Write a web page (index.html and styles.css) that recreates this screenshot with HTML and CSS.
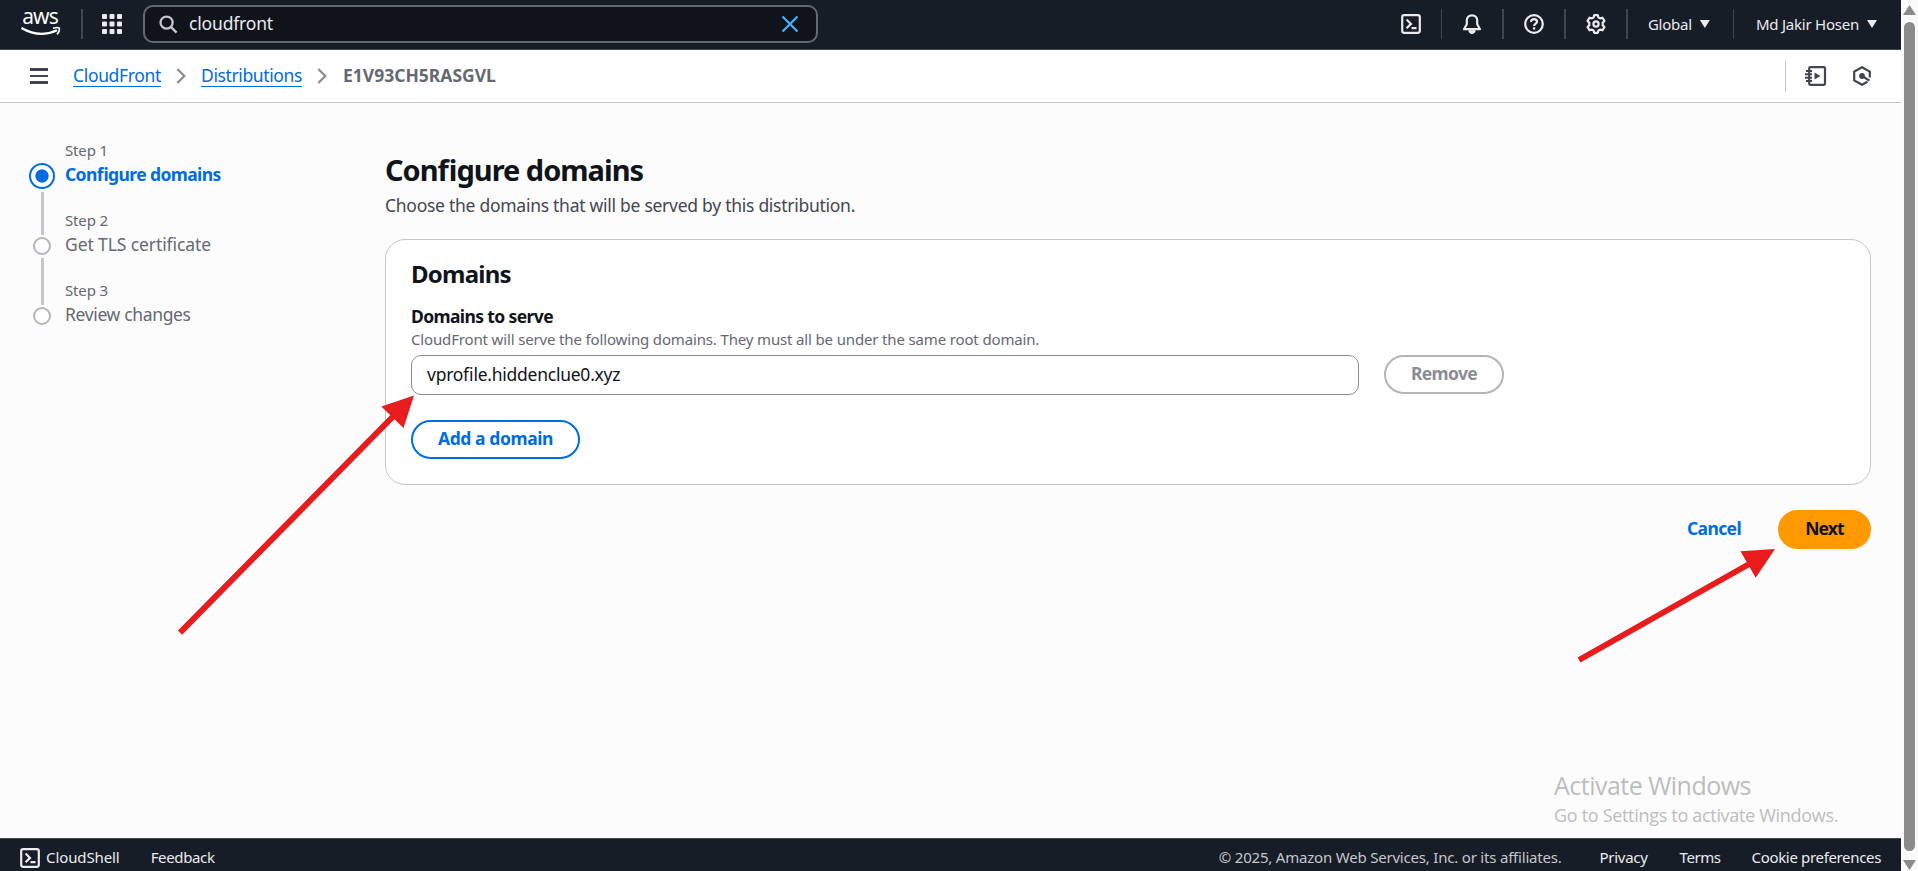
FILE: index.html
```html
<!DOCTYPE html>
<html lang="en">
<head>
<meta charset="utf-8">
<title>CloudFront - Configure domains</title>
<link rel="stylesheet" href="styles.css">
</head>
<body>
<div class="window">
  <div class="app">
    <header class="topnav">
      <svg class="logo" viewBox="0 0 40 26" aria-label="AWS">
        <text x="1.2" y="13.2" class="logo-text">aws</text>
        <path d="M.5 17Q18.500 27.500 36 19.200" fill="none" stroke="#fff" stroke-width="2.200"/>
        <path d="M32 17.200Q37 15.900 38.300 17.100Q39 20.100 36 23.400" fill="none" stroke="#fff" stroke-width="1.600"/>
      </svg>
      <span class="rule rule-logo"></span>
      <svg class="apps" viewBox="0 0 20 20" fill="#ebebf0">
        <rect x="0" y="0" width="5" height="5" rx="1"/><rect x="7.500" y="0" width="5" height="5" rx="1"/><rect x="15" y="0" width="5" height="5" rx="1"/>
        <rect x="0" y="7.500" width="5" height="5" rx="1"/><rect x="7.500" y="7.500" width="5" height="5" rx="1"/><rect x="15" y="7.500" width="5" height="5" rx="1"/>
        <rect x="0" y="15" width="5" height="5" rx="1"/><rect x="7.500" y="15" width="5" height="5" rx="1"/><rect x="15" y="15" width="5" height="5" rx="1"/>
      </svg>
      <div class="search">
        <svg class="search-icon" viewBox="0 0 20 20" fill="none" stroke="#c6c6cd" stroke-width="2.400"><circle cx="8" cy="8" r="6.400"/><path d="M12.500 12.500l6 6"/></svg>
        <span class="search-text">cloudfront</span>
        <svg class="clear" viewBox="0 0 16 16" fill="none" stroke="#42b4ff" stroke-width="2.200"><path d="M.5.5l15 15M15.500.5l-15 15"/></svg>
      </div>
      <div class="tools">
        <svg class="icon" viewBox="0 0 20 20"><rect x="1.200" y="1.200" width="17.600" height="17.600" rx="2"/><path d="M5.600 5.500l4.400 4.400-4.400 4.400M10.500 14.200h5"/></svg>
        <span class="rule"></span>
        <svg class="icon" viewBox="0 0 20 20"><path d="M10 1.400c-3.200 0-5.200 2.200-5.200 5.200v3.600L2 15.200h16l-2.800-5V6.600c0-3-2-5.200-5.200-5.200z" stroke-linejoin="round"/><path d="M7.300 16.200c.4 1.700 1.300 2.600 2.700 2.600s2.300-.9 2.700-2.600" fill="#ebebf0"/></svg>
        <span class="rule rule-wide"></span>
        <svg class="icon" viewBox="0 0 20 20"><circle cx="10" cy="10" r="8.800"/><path d="M7 8c0-1.900 1.300-2.900 3-2.900s3 1 3 2.600c0 1.800-2.900 2.100-2.900 4.300"/><path d="M10.100 13.300v2.200" stroke-width="2.300"/></svg>
        <span class="rule rule-wide"></span>
        <svg class="icon" viewBox="0 0 20 20"><path stroke-linejoin="round" d="M8.200 1.200h3.600l.7 2.400 1.500.8 2.500-.7 1.900 3.200-1.700 1.900v2.400l1.700 1.900-1.900 3.200-2.500-.7-1.500.8-.7 2.400H8.200l-.7-2.400-1.500-.8-2.500.7-1.900-3.200 1.700-1.900V8.800L1.600 6.900l1.900-3.200 2.500.7 1.500-.8z"/><circle cx="10" cy="10" r="2.600"/></svg>
        <span class="rule rule-wide"></span>
        <span class="menu menu-region">Global<i class="caret"></i></span>
        <span class="rule"></span>
        <span class="menu menu-user">Md Jakir Hosen<i class="caret"></i></span>
      </div>
    </header>

    <nav class="crumbs">
      <span class="burger"><i></i><i></i><i></i></span>
      <a class="crumb crumb-first">CloudFront</a>
      <svg class="chevron" viewBox="0 0 10 16"><path d="M1.300 1l7 7-7 7"/></svg>
      <a class="crumb crumb-second">Distributions</a>
      <svg class="chevron" viewBox="0 0 10 16"><path d="M1.300 1l7 7-7 7"/></svg>
      <b class="crumb-current">E1V93CH5RASGVL</b>
      <div class="panel-tools">
        <svg class="tutorial" viewBox="0 0 22 20"><rect x="4.200" y="1.200" width="15.800" height="17.600" rx="1"/><path d="M1 5h6M0 8.300h7M0 11.700h7M1 15h6" stroke-width="1.900"/><path d="M9.500 6.600v6.800l6-3.400z" fill="#424650" stroke="none"/></svg>
        <svg class="hexagon" viewBox="0 0 20 20"><path d="M17.800 11.500V5.600L10 1.200 2.200 5.600v8.800l7.800 4.400 5.500-3.100"/><circle cx="10" cy="10" r="2.900" fill="#424650" stroke="none"/><path d="M10 10l7.500 4.600"/></svg>
      </div>
    </nav>

    <main class="content">
      <ol class="steps">
        <li class="step step-active"><span class="track"><i class="dot"></i><i class="line"></i></span><div><div class="step-no">Step 1</div><div class="step-name">Configure domains</div></div></li>
        <li class="step"><span class="track"><i class="dot"></i><i class="line"></i></span><div><div class="step-no">Step 2</div><div class="step-name tls">Get TLS certificate</div></div></li>
        <li class="step"><span class="track"><i class="dot"></i></span><div><div class="step-no">Step 3</div><div class="step-name review">Review changes</div></div></li>
      </ol>
      <section class="wizard">
        <h1>Configure domains</h1>
        <p class="lead">Choose the domains that will be served by this distribution.</p>
        <div class="card">
          <h2>Domains</h2>
          <div class="label">Domains to serve</div>
          <div class="hint">CloudFront will serve the following domains. They must all be under the same root domain.</div>
          <div class="field-row">
            <div class="input">vprofile.hiddenclue0.xyz</div>
            <button class="btn btn-remove">Remove</button>
          </div>
          <button class="btn btn-add">Add a domain</button>
        </div>
        <div class="actions"><a class="cancel">Cancel</a><button class="btn btn-next">Next</button></div>
      </section>
    </main>

    <footer class="footer">
      <svg class="icon" viewBox="0 0 20 20"><rect x="1.200" y="1.200" width="17.600" height="17.600" rx="2"/><path d="M5.600 5.500l4.400 4.400-4.400 4.400M10.500 14.200h5"/></svg>
      <span class="shell">CloudShell</span><span class="feedback">Feedback</span>
      <span class="copyright">© 2025, Amazon Web Services, Inc. or its affiliates.</span>
      <span class="privacy">Privacy</span><span class="terms">Terms</span><span class="cookies">Cookie preferences</span>
    </footer>
  </div>

  <div class="scrollbar"><i class="arrow-up"></i><i class="thumb"></i><i class="arrow-down"></i></div>

  <div class="watermark"><div class="wm-title">Activate Windows</div><div class="wm-text">Go to Settings to activate Windows.</div></div>
  <svg class="annotations" viewBox="0 0 1918 871" fill="#e81c1c" stroke="#e81c1c">
    <path d="M180 632.700L394 415.500M1579 660L1751 563" stroke-width="6"/>
    <path d="M414 395.500L381.300 406.500 403.500 428zM1775 549L1740.500 551.200 1755.700 577.800z" stroke="none"/>
  </svg>
</div>
</body>
</html>
```
FILE: styles.css
```css
* { box-sizing: border-box; }
body { margin: 0; font-family: "Noto Sans", "Liberation Sans", sans-serif; font-size: 17.5px; line-height: 25px; color: #0f141a; }
svg { display: block; flex: none; }
h1, h2, p, ol { margin: 0; padding: 0; }
.window { position: relative; display: flex; width: 1918px; height: 871px; overflow: hidden; background: #fcfcfc; white-space: nowrap; }
.app { display: flex; flex-direction: column; width: 1901px; flex: none; }

.topnav { display: flex; align-items: center; height: 50px; padding: 0 24px 2px 21px; background: #161d26; border-bottom: 1px solid #424650; color: #ebebf0; flex: none; }
.logo { width: 40px; height: 26px; overflow: visible; }
.logo-text { font-size: 21px; fill: #fff; letter-spacing: -.9px; }
.rule { width: 1px; height: 30px; background: #424650; flex: none; }
.rule-wide { width: 2px; }
.rule-logo { width: 2px; margin: 0 19px 0 20px; }
.apps { width: 20px; height: 20px; margin-right: 21px; margin-top: 1px; }
.search { display: flex; align-items: center; width: 675px; height: 38px; margin-top: 1px; padding: 0 18px 0 14px; border: 2px solid #656871; border-radius: 10px; background: #0f141a; }
.search-icon { width: 19px; height: 19px; margin-right: 11px; }
.search-text { flex: 1; margin-top: -1px; letter-spacing: -.17px; }
.clear { width: 16px; height: 16px; }
.tools { display: flex; align-items: center; gap: 20px; margin-left: auto; font-size: 15px; }
.icon { width: 20px; height: 20px; fill: none; stroke: #ebebf0; stroke-width: 2.2; }
.menu { display: flex; align-items: center; gap: 8px; padding-top: 2px; letter-spacing: -.23px; }
.caret { width: 10px; height: 8px; margin-top: -1px; background: #ebebf0; clip-path: polygon(0 0, 100% 0, 50% 100%); }
.menu-region { margin-right: 3px; }
.menu-user { margin-left: 2px; }

.crumbs { display: flex; align-items: center; height: 53px; padding: 0 29px 0 30px; background: #fff; border-bottom: 1px solid #c6c6cd; flex: none; }
.burger { display: flex; flex-direction: column; gap: 4px; width: 18px; margin-right: 25px; }
.burger i { height: 2.500px; background: #424650; }
.crumb { color: #006ce0; height: 22px; border-bottom: 1px solid #006ce0; line-height: 20px; }
.crumb-first { width: 88px; letter-spacing: -.34px; }
.crumb-second { width: 101px; letter-spacing: -.38px; }
.chevron { width: 10px; height: 16px; margin: 0 15px 0 15px; fill: none; stroke: #8c8c94; stroke-width: 2.300; }
.crumb-current { color: #656871; font-weight: 700; margin-left: 1px; margin-top: -1px; }
.panel-tools { display: flex; align-items: center; gap: 25px; height: 31px; margin-left: auto; padding-left: 19px; border-left: 1px solid #c6c6cd; }
.panel-tools svg { fill: none; stroke: #424650; stroke-width: 2.200; }
.tutorial { width: 22px; height: 20px; }
.hexagon { width: 20px; height: 20px; }

.content { display: flex; flex: 1; padding: 37px 30px 0 29px; }
.steps { width: 356px; flex: none; list-style: none; }
.step { display: flex; gap: 10px; height: 70px; color: #656871; }
.track { display: flex; flex-direction: column; align-items: center; width: 26px; padding-top: 27px; gap: 3px; }
.dot { width: 18px; height: 18px; border: 2.500px solid #b4b4bb; border-radius: 50%; background: #fff; flex: none; }
.line { width: 3px; height: 47px; background: #c6c6cd; flex: none; }
.step-active .track { padding-top: 23px; gap: 3px; }
.step-active .dot { width: 26px; height: 26px; border: 2px solid #006ce0; background: radial-gradient(circle, #006ce0 6.200px, #fff 7px); }
.step-active .line { height: 43px; }
.step-no { font-size: 15px; line-height: 21px; letter-spacing: -.14px; }
.step-name { margin-top: 1px; letter-spacing: -.1px; }
.review { letter-spacing: -.35px; }
.step-active .step-name { color: #006ce0; font-weight: 700; letter-spacing: -.61px; font-feature-settings: "liga" 1; }

.wizard { flex: 1; padding-top: 11px; }
h1 { font-size: 29px; line-height: 37px; font-weight: 700; letter-spacing: -1px; font-feature-settings: "liga" 1; }
.lead { margin-top: 5px; color: #424650; letter-spacing: -.27px; }
.card { height: 246px; margin-top: 21px; padding: 19px 25px; border: 1px solid #c6c6cd; border-radius: 20px; background: #fff; }
h2 { font-size: 24px; line-height: 30px; font-weight: 700; letter-spacing: -.75px; }
.label { margin-top: 15px; font-weight: 700; letter-spacing: -.61px; }
.hint { font-size: 15px; line-height: 20px; letter-spacing: -.15px; color: #656871; }
.field-row { display: flex; align-items: flex-start; gap: 25px; margin-top: 6px; }
.input { width: 948px; height: 40px; padding: 0 15px; border: 1px solid #8c8c94; border-radius: 10px; line-height: 37px; letter-spacing: -.25px; font-feature-settings: "liga" 1; }
.btn { display: block; height: 39px; padding: 0 0 3px; border: 2px solid; border-radius: 20px; background: #fff; font: 700 17.5px/32px "Noto Sans", sans-serif; text-align: center; }
.btn-remove { width: 120px; color: #8c8c94; border-color: #b4b4bb; letter-spacing: -.67px; }
.btn-add { width: 169px; margin-top: 25px; color: #006ce0; border-color: #006ce0; letter-spacing: -.41px; }
.actions { display: flex; align-items: center; justify-content: flex-end; gap: 37px; margin-top: 25px; }
.cancel { margin-top: -2px; color: #006ce0; font-weight: 700; letter-spacing: -.63px; }
.btn-next { width: 93px; color: #0f141a; background: #ff9900; border-color: #ff9900; letter-spacing: -.9px; }

.footer { display: flex; align-items: center; height: 33px; padding: 5px 20px 0; background: #161d26; border-top: 1px solid #424650; color: #ebebf0; font-size: 15px; flex: none; }
.shell { margin-left: 6px; letter-spacing: -.1px; }
.feedback { margin-left: 31px; letter-spacing: -.35px; }
.copyright { margin-left: auto; color: #c6c6cd; letter-spacing: -.2px; }
.privacy { margin-left: 38px; letter-spacing: -.29px; }
.terms { margin-left: 32px; letter-spacing: -.43px; }
.cookies { margin-left: 31px; letter-spacing: -.34px; }

.scrollbar { display: flex; flex-direction: column; align-items: center; width: 17px; padding: 5px 0 1px; background: #fafafa; }
.thumb { width: 11px; height: 830px; margin: 7px 0 9px; border-radius: 6px; background: #8b8b8b; }
.arrow-up, .arrow-down { width: 13px; height: 10px; background: #8b8b8b; clip-path: polygon(50% 0, 100% 100%, 0 100%); }
.arrow-down { clip-path: polygon(0 0, 100% 0, 50% 100%); }

.watermark { position: absolute; left: 1554px; top: 767px; color: #bdbdbd; }
.wm-title { font-family: "Open Sans", sans-serif; font-size: 25px; line-height: 36px; letter-spacing: -.51px; }
.wm-text { font-family: "Open Sans", sans-serif; font-size: 18px; line-height: 24px; letter-spacing: -.31px; }
.annotations { position: absolute; inset: 0; width: 1918px; height: 871px; pointer-events: none; }
```
